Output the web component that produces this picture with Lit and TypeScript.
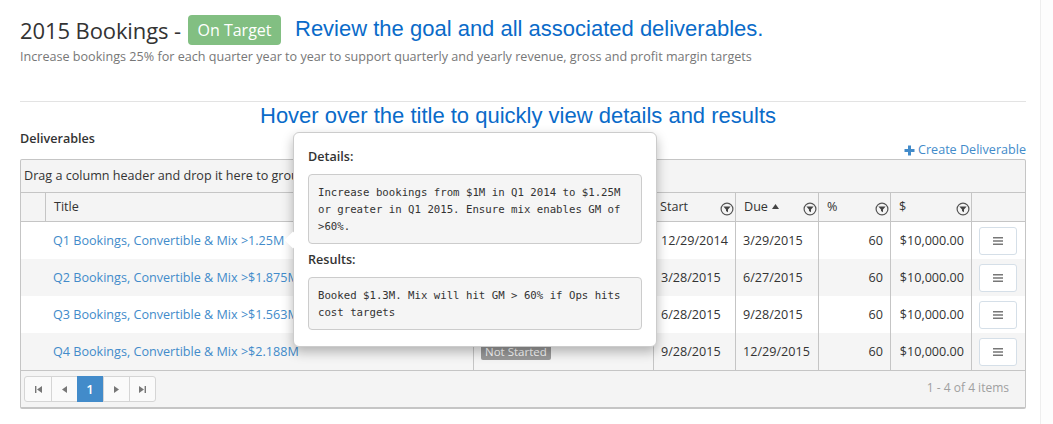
import { LitElement, html, css, svg } from 'lit';
import { customElement } from 'lit/decorators.js';

const rows = [
  { title: 'Q1 Bookings, Convertible & Mix >1.25M', start: '12/29/2014', due: '3/29/2015', status: false },
  { title: 'Q2 Bookings, Convertible & Mix >$1.875M', start: '3/28/2015', due: '6/27/2015', status: false },
  { title: 'Q3 Bookings, Convertible & Mix >$1.563M', start: '6/28/2015', due: '9/28/2015', status: false },
  { title: 'Q4 Bookings, Convertible & Mix >$2.188M', start: '9/28/2015', due: '12/29/2015', status: true },
];

const filterIcon = html`<svg class="filter" width="14" height="14" viewBox="0 0 14 14">
  <circle cx="7" cy="7" r="5.9" fill="none" stroke="#555" stroke-width="1.2"></circle>
  <path d="M3.4 4.6h7.2L8 7.6v2.6L6 9V7.6z" fill="#444"></path>
</svg>`;

const pagerIcon = (d: string) => html`<svg width="9" height="9" viewBox="0 0 9 9">${svg`<path d=${d} fill="#777"></path>`}</svg>`;

@customElement('app-root')
export class AppRoot extends LitElement {
  static styles = css`
    :host {
      display: block;
      position: relative;
      width: 1053px;
      height: 424px;
      overflow: hidden;
      background: #fff;
      font-family: "Open Sans", sans-serif;
      font-size: 12.6px;
      color: #333;
    }

    .page {
      width: 1006px;
      margin-left: 20px;
    }

    .strip {
      position: absolute;
      top: 0;
      right: 0;
      bottom: 0;
      width: 12px;
      background: #fdfdfd;
      border-left: 1px solid #eee;
    }

    .head {
      display: flex;
      align-items: center;
      height: 30px;
      padding-top: 15px;
    }

    h1 {
      margin: 0;
      width: 160px;
      font-size: 22px;
      font-weight: 400;
      color: #333;
      letter-spacing: -0.1px;
      white-space: nowrap;
    }

    .target {
      width: 93px;
      height: 30px;
      line-height: 30px;
      margin-left: 8px;
      text-align: center;
      border-radius: 4px;
      background: #82bf82;
      color: #fff;
      font-size: 16px;
    }

    .note {
      font-family: "Liberation Sans", Arial, sans-serif;
      color: #0a6bc9;
      font-size: 22px;
      line-height: 26px;
    }

    .head .note {
      margin-left: 14px;
      margin-top: -3px;
    }

    .sub {
      margin: 3px 0 0;
      height: 18px;
      line-height: 18px;
      font-size: 12.6px;
      color: #777;
    }

    hr {
      margin: 35px 0 0;
      border: 0;
      border-top: 1px solid #e3e3e3;
    }

    .hover-note {
      padding-left: 240px;
      height: 25px;
      margin-top: 1px;
    }

    .bar {
      display: flex;
      justify-content: space-between;
      height: 31px;
    }

    .bar b {
      font-weight: 600;
      font-size: 12.6px;
      line-height: 18px;
      margin-top: 2px;
    }

    .create {
      color: #428bca;
      font-size: 12.6px;
      line-height: 18px;
      margin-top: 13px;
      display: flex;
      align-items: center;
      gap: 3px;
    }

    .grid {
      border: 1px solid #c5c5c5;
      border-bottom-width: 2px;
      border-radius: 2px;
      background: #f4f4f4;
    }

    .group {
      height: 32px;
      line-height: 32px;
      padding-left: 3px;
      border-bottom: 1px solid #c5c5c5;
      white-space: nowrap;
      font-size: 12.6px;
    }

    table {
      width: 1004px;
      table-layout: fixed;
      border-collapse: separate;
      border-spacing: 0;
    }

    th {
      height: 28px;
      padding: 0 0 0 8px;
      font-weight: 400;
      text-align: left;
      border-left: 1px solid #c5c5c5;
      border-bottom: 1px solid #c5c5c5;
    }

    th:first-child,
    td:first-child {
      border-left: 0;
    }

    .th {
      display: flex;
      align-items: center;
      justify-content: space-between;
      padding-right: 1px;
    }

    .label {
      display: flex;
      align-items: center;
      gap: 4px;
      margin-top: -2px;
    }

    .filter {
      margin-top: 3px;
    }

    td {
      height: 37px;
      padding: 0 7px;
      box-sizing: border-box;
      border-left: 1px solid #c5c5c5;
      background: #fff;
      white-space: nowrap;
      overflow: hidden;
    }

    tr.alt td {
      background: #f5f5f5;
    }

    td.nob {
      border-left: 0;
    }

    td.num {
      text-align: right;
    }

    td.act {
      padding: 0 0 0 7px;
    }

    a {
      color: #428bca;
      text-decoration: none;
    }

    .status {
      display: inline-block;
      padding: 0 4px;
      height: 16px;
      line-height: 16px;
      border-radius: 2px;
      background: #999;
      color: #fff;
      font-size: 11.5px;
    }

    .menu {
      display: flex;
      align-items: center;
      justify-content: center;
      width: 38px;
      height: 28px;
      box-sizing: border-box;
      background: #fff;
      border: 1px solid #d5dfe8;
      border-radius: 3px;
    }

    .footer {
      display: flex;
      align-items: center;
      justify-content: space-between;
      height: 36px;
      padding: 0 16px 0 3px;
      border-top: 1px solid #c5c5c5;
      color: #a0a0a0;
      font-size: 12px;
    }

    .count {
      margin-top: -4px;
    }

    .pager {
      display: flex;
      height: 26px;
      box-sizing: border-box;
      border: 1px solid #d5d5d5;
      border-radius: 3px;
      background: #fafafa;
    }

    .pager span {
      display: flex;
      align-items: center;
      justify-content: center;
      width: 26px;
      box-sizing: border-box;
      border-left: 1px solid #d5d5d5;
    }

    .pager span:first-child {
      border-left: 0;
    }

    .pager span.on {
      margin: -1px 0;
      background: #428bca;
      border-left: 0;
      color: #fff;
      font-weight: 600;
      font-size: 13px;
    }

    .popover {
      position: absolute;
      left: 293px;
      top: 132px;
      width: 364px;
      height: 215px;
      box-sizing: border-box;
      padding: 15px 14px 0 14px;
      background: #fff;
      border: 1px solid #ccc;
      border-radius: 6px;
      box-shadow: 0 5px 12px rgba(0, 0, 0, 0.28);
    }

    .popover::before {
      content: '';
      position: absolute;
      left: -7px;
      top: 101px;
      width: 12px;
      height: 12px;
      background: #fff;
      transform: rotate(45deg);
    }

    .popover h4 {
      position: relative;
      margin: 0;
      font-size: 12.6px;
      font-weight: 600;
      line-height: 18px;
    }

    pre {
      margin: 8px 0 7px;
      padding: 9px 9px 8px 9px;
      background: #f5f5f5;
      border: 1px solid #ccc;
      border-radius: 4px;
      font-family: "DejaVu Sans Mono", monospace;
      font-size: 10.7px;
      line-height: 17px;
      color: #333;
      white-space: pre-wrap;
    }
  `;

  render() {
    return html`
      <div class="page">
        <div class="head">
          <h1>2015 Bookings -</h1>
          <div class="target">On Target</div>
          <div class="note">Review the goal and all associated deliverables.</div>
        </div>
        <p class="sub">Increase bookings 25% for each quarter year to year to support quarterly and yearly revenue, gross and profit margin targets</p>
        <hr />
        <div class="note hover-note">Hover over the title to quickly view details and results</div>
        <div class="bar">
          <b>Deliverables</b>
          <a class="create">
            <svg width="11" height="11" viewBox="0 0 11 11"><path d="M4 0.5h3V4h3.5v3H7v3.5H4V7H0.5V4H4z" fill="#428bca"></path></svg>
            Create Deliverable
          </a>
        </div>
        <div class="grid">
          <div class="group">Drag a column header and drop it here to group by that column</div>
          <table>
            <colgroup>
              <col style="width:24px" /><col style="width:428px" /><col style="width:180px" /><col style="width:82px" />
              <col style="width:83px" /><col style="width:72px" /><col style="width:81px" /><col style="width:54px" />
            </colgroup>
            <thead>
              <tr>
                <th></th>
                <th><div class="th"><span class="label">Title</span></div></th>
                <th></th>
                <th><div class="th"><span class="label" style="margin-left:-2px">Start</span>${filterIcon}</div></th>
                <th><div class="th"><span class="label">Due <svg width="7" height="5" viewBox="0 0 7 5"><path d="M3.5 0L7 5H0z" fill="#444"></path></svg></span>${filterIcon}</div></th>
                <th><div class="th"><span class="label">%</span>${filterIcon}</div></th>
                <th><div class="th"><span class="label">$</span>${filterIcon}</div></th>
                <th></th>
              </tr>
            </thead>
            <tbody>
              ${rows.map((r, i) => html`
                <tr class=${i % 2 ? 'alt' : ''}>
                  <td class="nob"></td>
                  <td class="nob"><a style="margin-left:1px">${r.title}</a></td>
                  <td>${r.status ? html`<span class="status">Not Started</span>` : ''}</td>
                  <td>${r.start}</td>
                  <td>${r.due}</td>
                  <td class="num">60</td>
                  <td class="num">$10,000.00</td>
                  <td class="act">
                    <div class="menu">
                      <svg width="10" height="8" viewBox="0 0 10 8"><path d="M0 0h10v1.6H0zM0 3.2h10v1.6H0zM0 6.4h10V8H0z" fill="#777"></path></svg>
                    </div>
                  </td>
                </tr>
              `)}
            </tbody>
          </table>
          <div class="footer">
            <div class="pager">
              <span>${pagerIcon('M1 1h1.4v7H1zM8 1v7L3 4.5z')}</span>
              <span>${pagerIcon('M7 1v7L2 4.5z')}</span>
              <span class="on">1</span>
              <span>${pagerIcon('M2 1v7l5-3.5z')}</span>
              <span>${pagerIcon('M1 1v7l5-3.5zM6.6 1H8v7H6.6z')}</span>
            </div>
            <div class="count">1 - 4 of 4 items</div>
          </div>
        </div>
      </div>
      <div class="strip"></div>
      <div class="popover">
        <h4>Details:</h4>
        <pre>Increase bookings from $1M in Q1 2014 to $1.25M or greater in Q1 2015. Ensure mix enables GM of >60%.</pre>
        <h4>Results:</h4>
        <pre>Booked $1.3M. Mix will hit GM > 60% if Ops hits cost targets</pre>
      </div>
    `;
  }
}
